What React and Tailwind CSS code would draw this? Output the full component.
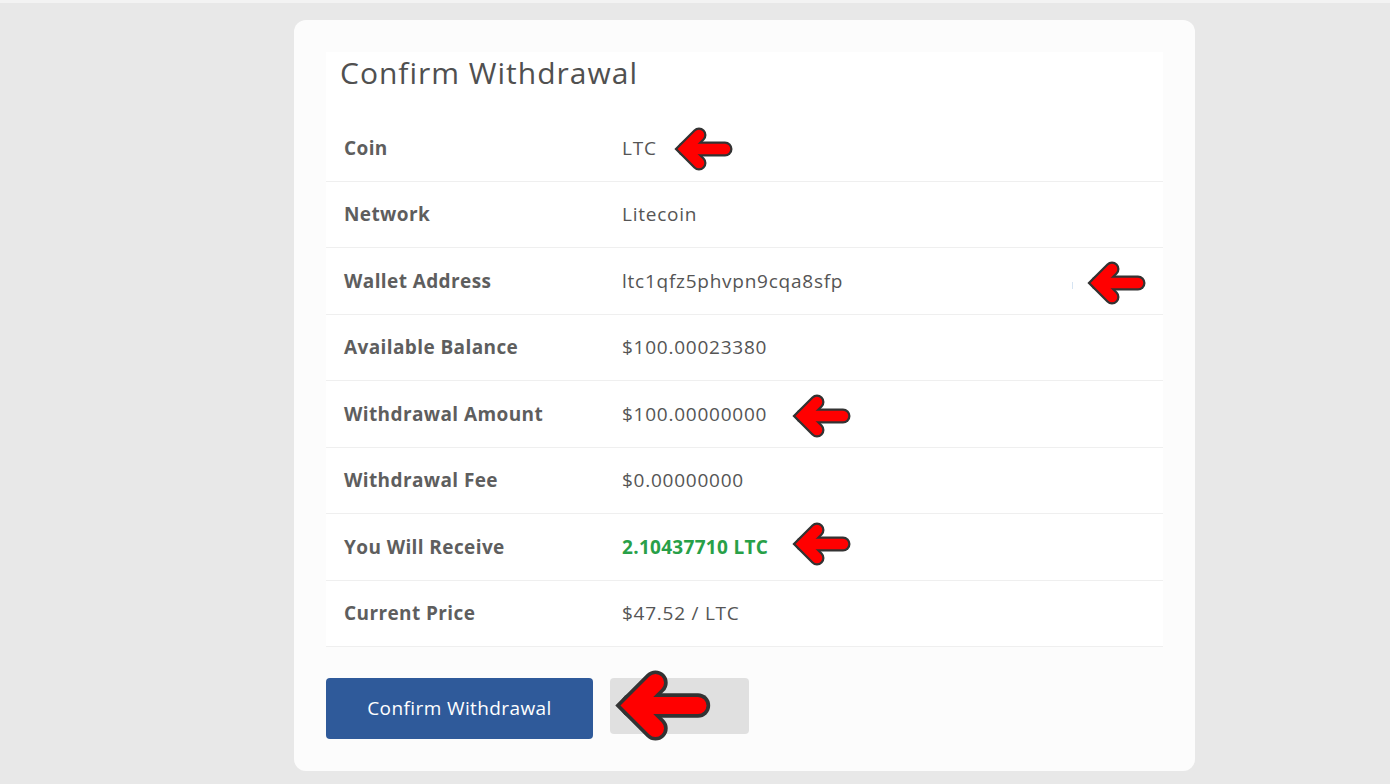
import React from "react"

const rows = [
  { label: "Coin", value: "LTC" },
  { label: "Network", value: "Litecoin" },
  { label: "Wallet Address", value: "ltc1qfz5phvpn9cqa8sfp", mark: true },
  { label: "Available Balance", value: "$100.00023380" },
  { label: "Withdrawal Amount", value: "$100.00000000" },
  { label: "Withdrawal Fee", value: "$0.00000000" },
  { label: "You Will Receive", value: "2.10437710 LTC", green: true },
  { label: "Current Price", value: "$47.52 / LTC" },
]

const Arrow = ({ className }) => (
  <svg viewBox="0 0 60 48" className={className}>
    <g fill="none" strokeLinecap="round" strokeLinejoin="miter">
      <polyline points="26,10 12,24 26,38" stroke="#333" strokeWidth="15" />
      <line x1="12" y1="24" x2="52" y2="24" stroke="#333" strokeWidth="15" />
      <polyline points="26,10 12,24 26,38" stroke="#ff0000" strokeWidth="10.5" />
      <line x1="14" y1="24" x2="52" y2="24" stroke="#ff0000" strokeWidth="10.5" />
    </g>
  </svg>
)

export default function App() {
  return (
    <div
      className="relative min-h-screen bg-[#e8e8e8] pb-[14px]"
      style={{ fontFamily: "'Open Sans', Lato, sans-serif" }}
    >
      <div className="h-[3px] bg-[#f3f3f3]" />
      <div className="ml-[294px] mt-[17px] w-[901px] rounded-[12px] bg-[#fcfcfc] p-8">
        <div className="bg-white">
          <h2 className="h-[63px] pl-[14px] pt-[1px] text-[30px] leading-[40px] tracking-[1px] text-[#505050]">
            Confirm Withdrawal
          </h2>
          {rows.map((r) => (
            <div
              key={r.label}
              className="relative flex h-[66.5px] items-center border-b border-[#efefef]"
            >
              <div className="w-[296px] pl-[18px] text-[19px] font-bold tracking-[0.4px] text-[#5e5e5e]">
                {r.label}
              </div>
              <div
                className={
                  r.green
                    ? "text-[19px] font-bold tracking-[0.3px] text-[#28a048]"
                    : "text-[19px] tracking-[0.75px] text-[#555]"
                }
              >
                {r.value}
              </div>
              {r.mark && <span className="absolute left-[746px] top-[34px] h-[7px] w-px bg-[#d6e4f2]" />}
            </div>
          ))}
        </div>
        <div className="mt-[31px] flex items-start gap-[17px]">
          <button className="h-[61px] w-[267px] rounded-[4px] bg-[#2f5a9a] text-[19px] tracking-[0.4px] text-white">
            Confirm Withdrawal
          </button>
          <button className="h-[56px] w-[139px] rounded-[4px] bg-[#e0e0e0]" />
        </div>
      </div>

      <Arrow className="absolute left-[673px] top-[125px] h-[48px] w-[60px]" />
      <Arrow className="absolute left-[1086px] top-[259px] h-[48px] w-[60px]" />
      <Arrow className="absolute left-[791px] top-[392px] h-[48px] w-[60px]" />
      <Arrow className="absolute left-[791px] top-[520px] h-[48px] w-[60px]" />
      <Arrow className="absolute left-[613px] top-[666px] h-[79px] w-[98px]" />
    </div>
  )
}
